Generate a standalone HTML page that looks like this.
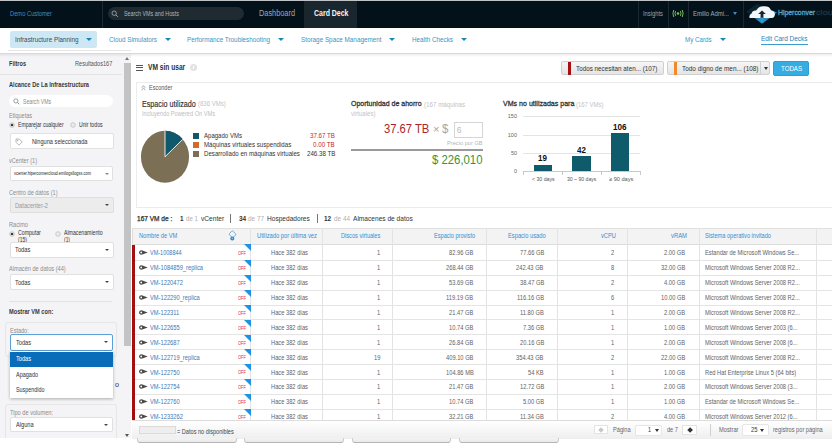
<!DOCTYPE html>
<html><head><meta charset="utf-8"><style>
html,body{margin:0;padding:0;width:832px;height:444px;overflow:hidden;background:#fff;position:relative;font-family:"Liberation Sans", sans-serif;}

</style></head><body style="">
<div style="position:absolute;left:0px;top:0px;width:832px;height:1px;background:#bfc3c6;"></div>
<div style="position:absolute;left:0px;top:1px;width:832px;height:27px;background:#03111a;"></div>
<span style="position:absolute;left:10.00px;top:10.00px;white-space:pre;line-height:7px;font-family:&quot;Liberation Sans&quot;, sans-serif;font-size:7px;font-weight:400;color:#3d8fc2;transform:scaleX(0.8240);transform-origin:0 0;">Demo Customer</span>
<div style="position:absolute;left:102px;top:1px;width:1px;height:27px;background:#1b2a33;"></div>
<div style="position:absolute;left:108px;top:7px;width:136px;height:13px;background:#1f2b31;border-radius:7px;"></div>
<svg style="position:absolute;left:111px;top:10px" width="8" height="8" viewBox="0 0 8 8"><circle cx="3.2" cy="3.2" r="2.2" fill="none" stroke="#9aa4a9" stroke-width="0.9"/><line x1="4.8" y1="4.8" x2="6.8" y2="6.8" stroke="#9aa4a9" stroke-width="1"/></svg>
<span style="position:absolute;left:124.00px;top:10.00px;white-space:pre;line-height:7px;font-family:&quot;Liberation Sans&quot;, sans-serif;font-size:7px;font-weight:400;color:#aeb7bc;transform:scaleX(0.7682);transform-origin:0 0;">Search VMs and Hosts</span>
<span style="position:absolute;left:258.50px;top:8.75px;white-space:pre;line-height:8.5px;font-family:&quot;Liberation Sans&quot;, sans-serif;font-size:8.5px;font-weight:400;color:#a0a8ad;transform:scaleX(0.8655);transform-origin:0 0;">Dashboard</span>
<div style="position:absolute;left:304px;top:1px;width:53px;height:27px;background:#1a262d;"></div>
<span style="position:absolute;left:313.50px;top:8.75px;white-space:pre;line-height:8.5px;font-family:&quot;Liberation Sans&quot;, sans-serif;font-size:8.5px;font-weight:700;color:#f4f6f7;transform:scaleX(0.8202);transform-origin:0 0;">Card Deck</span>
<div style="position:absolute;left:637.5px;top:1px;width:1.0px;height:27px;background:#1a2830;"></div>
<div style="position:absolute;left:668px;top:1px;width:1px;height:27px;background:#1a2830;"></div>
<div style="position:absolute;left:687.5px;top:1px;width:1.0px;height:27px;background:#1a2830;"></div>
<div style="position:absolute;left:742.5px;top:1px;width:1.0px;height:27px;background:#1a2830;"></div>
<span style="position:absolute;left:643.00px;top:9.75px;white-space:pre;line-height:7.5px;font-family:&quot;Liberation Sans&quot;, sans-serif;font-size:7.5px;font-weight:400;color:#9aa3a8;transform:scaleX(0.7734);transform-origin:0 0;">Insights</span>
<svg style="position:absolute;left:672px;top:9px" width="12" height="9" viewBox="0 0 12 9"><circle cx="6" cy="4.5" r="1.3" fill="#7ac05a"/><path d="M3.6 2.2 Q2.4 4.5 3.6 6.8 M8.4 2.2 Q9.6 4.5 8.4 6.8" fill="none" stroke="#7ac05a" stroke-width="1"/><path d="M1.8 1 Q0 4.5 1.8 8 M10.2 1 Q12 4.5 10.2 8" fill="none" stroke="#7ac05a" stroke-width="1"/></svg>
<span style="position:absolute;left:693.00px;top:9.50px;white-space:pre;line-height:8px;font-family:&quot;Liberation Sans&quot;, sans-serif;font-size:8px;font-weight:400;color:#a3abb0;transform:scaleX(0.7427);transform-origin:0 0;">Emilio Admi...</span>
<div style="position:absolute;left:733px;top:12px;width:0;height:0;border-left:2.5px solid transparent;border-right:2.5px solid transparent;border-top:3.5px solid #3d8fc2;"></div>
<svg style="position:absolute;left:744px;top:1px" width="38" height="26" viewBox="744 1 38 26">
<defs><linearGradient id="dg" x1="0" y1="0" x2="1" y2="1"><stop offset="0.35" stop-color="#0c2631"/><stop offset="0.6" stop-color="#2a8cc0"/></linearGradient></defs>
<polygon points="746.3,11.8 757,4 777,12.4 762,23.8" fill="url(#dg)"/>
<path d="M749.6 18 Q748.6 14.6 751.6 13.4 Q752.6 10.2 756.2 10.6 Q758.4 6 764 6.2 Q770 6 771 10.6 Q774.9 11 774.9 14.6 Q774.6 18 771.8 18 Z" fill="#f3f5f7"/>
<polygon points="762,10.6 758.2,13.9 760.6,13.9 760.6,18 763.4,18 763.4,13.9 765.8,13.9" fill="#0d2833"/>
<rect x="760.6" y="17.5" width="2.8" height="5" fill="#2f9bd0"/>
</svg>
<span style="position:absolute;left:778.40px;top:9.40px;white-space:pre;line-height:7.8px;font-family:&quot;Liberation Sans&quot;, sans-serif;font-size:7.8px;font-weight:400;color:#58a2c6;transform:scaleX(0.8800);transform-origin:0 0;-webkit-text-stroke:0.35px #58a2c6;">Hiperconver</span>
<span style="position:absolute;left:815.50px;top:9.40px;white-space:pre;line-height:7.8px;font-family:&quot;Liberation Sans&quot;, sans-serif;font-size:7.8px;font-weight:400;color:#183444;transform:scaleX(1.1802);transform-origin:0 0;-webkit-text-stroke:0.35px #183444;">cloud</span>
<div style="position:absolute;left:0px;top:28px;width:832px;height:25px;background:#ffffff;"></div>
<div style="position:absolute;left:9.5px;top:31.3px;width:87.0px;height:16.7px;background:#cde8f4;border-radius:2px;"></div>
<span style="position:absolute;left:14.50px;top:35.90px;white-space:pre;line-height:7px;font-family:&quot;Liberation Sans&quot;, sans-serif;font-size:7px;font-weight:400;color:#3e4a50;transform:scaleX(0.9015);transform-origin:0 0;">Infrastructure Planning</span>
<div style="position:absolute;left:85.5px;top:38px;width:0;height:0;border-left:3.25px solid transparent;border-right:3.25px solid transparent;border-top:3.5px solid #1a86b5;"></div>
<span style="position:absolute;left:108.50px;top:35.90px;white-space:pre;line-height:7px;font-family:&quot;Liberation Sans&quot;, sans-serif;font-size:7px;font-weight:400;color:#3a94c0;transform:scaleX(0.9004);transform-origin:0 0;">Cloud Simulators</span>
<div style="position:absolute;left:165px;top:38px;width:0;height:0;border-left:3.25px solid transparent;border-right:3.25px solid transparent;border-top:3.5px solid #1a86b5;"></div>
<span style="position:absolute;left:187.00px;top:35.90px;white-space:pre;line-height:7px;font-family:&quot;Liberation Sans&quot;, sans-serif;font-size:7px;font-weight:400;color:#3a94c0;transform:scaleX(0.9037);transform-origin:0 0;">Performance Troubleshooting</span>
<div style="position:absolute;left:277.5px;top:38px;width:0;height:0;border-left:3.25px solid transparent;border-right:3.25px solid transparent;border-top:3.5px solid #1a86b5;"></div>
<span style="position:absolute;left:301.00px;top:35.90px;white-space:pre;line-height:7px;font-family:&quot;Liberation Sans&quot;, sans-serif;font-size:7px;font-weight:400;color:#3a94c0;transform:scaleX(0.9032);transform-origin:0 0;">Storage Space Management</span>
<div style="position:absolute;left:389px;top:38px;width:0;height:0;border-left:3.25px solid transparent;border-right:3.25px solid transparent;border-top:3.5px solid #1a86b5;"></div>
<span style="position:absolute;left:412.00px;top:35.90px;white-space:pre;line-height:7px;font-family:&quot;Liberation Sans&quot;, sans-serif;font-size:7px;font-weight:400;color:#3a94c0;transform:scaleX(0.9005);transform-origin:0 0;">Health Checks</span>
<div style="position:absolute;left:461px;top:38px;width:0;height:0;border-left:3.25px solid transparent;border-right:3.25px solid transparent;border-top:3.5px solid #1a86b5;"></div>
<span style="position:absolute;left:685.00px;top:35.75px;white-space:pre;line-height:7.5px;font-family:&quot;Liberation Sans&quot;, sans-serif;font-size:7.5px;font-weight:400;color:#3a94c0;transform:scaleX(0.8257);transform-origin:0 0;">My Cards</span>
<div style="position:absolute;left:719.5px;top:38px;width:0;height:0;border-left:3.25px solid transparent;border-right:3.25px solid transparent;border-top:3.5px solid #1a86b5;"></div>
<span style="position:absolute;left:761.00px;top:35.25px;white-space:pre;line-height:7.5px;font-family:&quot;Liberation Sans&quot;, sans-serif;font-size:7.5px;font-weight:400;color:#2a7fae;transform:scaleX(0.8581);transform-origin:0 0;">Edit Card Decks</span>
<div style="position:absolute;left:761px;top:44px;width:46.5px;height:1px;background:#3a9ac8;"></div>
<div style="position:absolute;left:8px;top:50px;width:123px;height:0.6000000000000014px;background:#e6e6e6;"></div>
<div style="position:absolute;left:0px;top:53px;width:832px;height:1px;background:#d9d9d9;"></div>
<div style="position:absolute;left:0px;top:54px;width:122px;height:384px;background:#f4f4f6;"></div>
<div style="position:absolute;left:122px;top:54px;width:9px;height:384px;background:#f4f4f6;"></div>
<div style="position:absolute;left:123.5px;top:63px;width:7.0px;height:283px;background:#c3c3c3;"></div>
<div style="position:absolute;left:125px;top:57px;width:0;height:0;border-left:2.5px solid transparent;border-right:2.5px solid transparent;border-bottom:3px solid #777;"></div>
<div style="position:absolute;left:125px;top:433.5px;width:0;height:0;border-left:2.5px solid transparent;border-right:2.5px solid transparent;border-top:3px solid #555;"></div>
<div style="position:absolute;left:0px;top:54px;width:832px;height:2.5px;background:linear-gradient(rgba(0,0,0,0.07),rgba(0,0,0,0));"></div>
<span style="position:absolute;left:9.00px;top:59.95px;white-space:pre;line-height:7.5px;font-family:&quot;Liberation Sans&quot;, sans-serif;font-size:7.5px;font-weight:700;color:#333a3e;transform:scaleX(0.7416);transform-origin:0 0;">Filtros</span>
<span style="position:absolute;left:75.00px;top:59.95px;white-space:pre;line-height:7.5px;font-family:&quot;Liberation Sans&quot;, sans-serif;font-size:7.5px;font-weight:400;color:#555;transform:scaleX(0.7453);transform-origin:0 0;">Resultados167</span>
<div style="position:absolute;left:0px;top:73.5px;width:122px;height:1.0px;background:#e3e3e5;"></div>
<span style="position:absolute;left:9.00px;top:81.25px;white-space:pre;line-height:7.5px;font-family:&quot;Liberation Sans&quot;, sans-serif;font-size:7.5px;font-weight:700;color:#333a3e;transform:scaleX(0.7526);transform-origin:0 0;">Alcance De La Infraestructura</span>
<div style="position:absolute;left:9px;top:95px;width:104px;height:12px;background:#fff;border-radius:6px;"></div>
<svg style="position:absolute;left:12.5px;top:98px" width="7" height="7" viewBox="0 0 7 7"><circle cx="2.9" cy="2.9" r="2.1" fill="none" stroke="#888" stroke-width="0.8"/><line x1="4.4" y1="4.4" x2="6.3" y2="6.3" stroke="#888" stroke-width="0.9"/></svg>
<span style="position:absolute;left:22.70px;top:97.90px;white-space:pre;line-height:7px;font-family:&quot;Liberation Sans&quot;, sans-serif;font-size:7px;font-weight:400;color:#8a8a8a;transform:scaleX(0.7344);transform-origin:0 0;">Search VMs</span>
<span style="position:absolute;left:9.00px;top:111.75px;white-space:pre;line-height:7.5px;font-family:&quot;Liberation Sans&quot;, sans-serif;font-size:7.5px;font-weight:400;color:#8c8c8c;transform:scaleX(0.7353);transform-origin:0 0;">Etiquetas</span>
<svg style="position:absolute;left:8.6px;top:121.9px" width="6" height="6" viewBox="0 0 6 6"><circle cx="3" cy="3" r="2.3" fill="#fff" stroke="#a8a8a8" stroke-width="0.6"/><circle cx="3" cy="3" r="1.35" fill="#3a3a3a"/></svg>
<span style="position:absolute;left:18.00px;top:121.40px;white-space:pre;line-height:7px;font-family:&quot;Liberation Sans&quot;, sans-serif;font-size:7px;font-weight:400;color:#333;transform:scaleX(0.7278);transform-origin:0 0;">Emparejar cualquier</span>
<svg style="position:absolute;left:70.2px;top:121.9px" width="6" height="6" viewBox="0 0 6 6"><circle cx="3" cy="3" r="2.3" fill="#ececec" stroke="#b0b0b0" stroke-width="0.6"/></svg>
<span style="position:absolute;left:79.00px;top:121.40px;white-space:pre;line-height:7px;font-family:&quot;Liberation Sans&quot;, sans-serif;font-size:7px;font-weight:400;color:#333;transform:scaleX(0.7397);transform-origin:0 0;">Unir todos</span>
<div style="position:absolute;left:9.5px;top:133px;width:104.0px;height:16.30000000000001px;background:#fff;border:1px solid #e1e1e1;border-radius:2px;box-sizing:border-box;"></div>
<svg style="position:absolute;left:15px;top:137.5px" width="8" height="8" viewBox="0 0 8 8"><path d="M1 1 L4.2 1 L7.2 4 L4 7.2 L1 4.2 Z" fill="none" stroke="#999" stroke-width="0.7"/><circle cx="2.6" cy="2.6" r="0.6" fill="#999"/></svg>
<span style="position:absolute;left:31.70px;top:137.60px;white-space:pre;line-height:7px;font-family:&quot;Liberation Sans&quot;, sans-serif;font-size:7px;font-weight:400;color:#333;transform:scaleX(0.8056);transform-origin:0 0;">Ninguna seleccionada</span>
<span style="position:absolute;left:9.00px;top:156.95px;white-space:pre;line-height:7.5px;font-family:&quot;Liberation Sans&quot;, sans-serif;font-size:7.5px;font-weight:400;color:#8c8c8c;transform:scaleX(0.7464);transform-origin:0 0;">vCenter (1)</span>
<div style="position:absolute;left:9.5px;top:166px;width:103.8px;height:15.300000000000011px;background:#fff;border:1px solid #e0e0e0;border-radius:2px;box-sizing:border-box;"></div>
<span style="position:absolute;left:13.80px;top:171.15px;white-space:pre;line-height:5px;font-family:&quot;Liberation Sans&quot;, sans-serif;font-size:5px;font-weight:400;color:#222;transform:scaleX(0.7871);transform-origin:0 0;">vcenter.hiperconvercloud.emilogsllogss.com</span>
<div style="position:absolute;left:104.8px;top:172.65px;width:0;height:0;border-left:2px solid transparent;border-right:2px solid transparent;border-top:2.5px solid #888;"></div>
<span style="position:absolute;left:9.00px;top:188.85px;white-space:pre;line-height:7.5px;font-family:&quot;Liberation Sans&quot;, sans-serif;font-size:7.5px;font-weight:400;color:#8c8c8c;transform:scaleX(0.7520);transform-origin:0 0;">Centro de datos (1)</span>
<div style="position:absolute;left:9.5px;top:197.4px;width:104.0px;height:15.599999999999994px;background:#ececec;border:1px solid #dedede;border-radius:2px;box-sizing:border-box;"></div>
<span style="position:absolute;left:15.00px;top:201.70px;white-space:pre;line-height:7px;font-family:&quot;Liberation Sans&quot;, sans-serif;font-size:7px;font-weight:400;color:#999;transform:scaleX(0.8154);transform-origin:0 0;">Datacenter-2</span>
<div style="position:absolute;left:105.0px;top:204.2px;width:0;height:0;border-left:2px solid transparent;border-right:2px solid transparent;border-top:2.5px solid #444;"></div>
<span style="position:absolute;left:9.00px;top:221.25px;white-space:pre;line-height:7.5px;font-family:&quot;Liberation Sans&quot;, sans-serif;font-size:7.5px;font-weight:400;color:#8c8c8c;transform:scaleX(0.7469);transform-origin:0 0;">Racimo</span>
<svg style="position:absolute;left:8.6px;top:230.6px" width="6" height="6" viewBox="0 0 6 6"><circle cx="3" cy="3" r="2.3" fill="#fff" stroke="#a8a8a8" stroke-width="0.6"/><circle cx="3" cy="3" r="1.35" fill="#3a3a3a"/></svg>
<span style="position:absolute;left:17.50px;top:230.35px;white-space:pre;line-height:6.5px;font-family:&quot;Liberation Sans&quot;, sans-serif;font-size:6.5px;font-weight:400;color:#333;transform:scaleX(0.7987);transform-origin:0 0;">Computar</span>
<span style="position:absolute;left:17.50px;top:237.25px;white-space:pre;line-height:6.5px;font-family:&quot;Liberation Sans&quot;, sans-serif;font-size:6.5px;font-weight:400;color:#333;transform:scaleX(0.7784);transform-origin:0 0;">(15)</span>
<svg style="position:absolute;left:54.6px;top:230.6px" width="6" height="6" viewBox="0 0 6 6"><circle cx="3" cy="3" r="2.3" fill="#ececec" stroke="#b0b0b0" stroke-width="0.6"/></svg>
<span style="position:absolute;left:63.60px;top:230.35px;white-space:pre;line-height:6.5px;font-family:&quot;Liberation Sans&quot;, sans-serif;font-size:6.5px;font-weight:400;color:#333;transform:scaleX(0.7992);transform-origin:0 0;">Almacenamiento</span>
<span style="position:absolute;left:63.60px;top:237.25px;white-space:pre;line-height:6.5px;font-family:&quot;Liberation Sans&quot;, sans-serif;font-size:6.5px;font-weight:400;color:#333;transform:scaleX(0.7544);transform-origin:0 0;">(1)</span>
<div style="position:absolute;left:9.5px;top:242px;width:104.0px;height:15.5px;background:#fff;border:1px solid #e0e0e0;border-radius:2px;box-sizing:border-box;"></div>
<span style="position:absolute;left:15.40px;top:246.25px;white-space:pre;line-height:7px;font-family:&quot;Liberation Sans&quot;, sans-serif;font-size:7px;font-weight:400;color:#333;transform:scaleX(0.8241);transform-origin:0 0;">Todas</span>
<div style="position:absolute;left:105.0px;top:248.75px;width:0;height:0;border-left:2px solid transparent;border-right:2px solid transparent;border-top:2.5px solid #444;"></div>
<span style="position:absolute;left:9.00px;top:265.45px;white-space:pre;line-height:7.5px;font-family:&quot;Liberation Sans&quot;, sans-serif;font-size:7.5px;font-weight:400;color:#8c8c8c;transform:scaleX(0.7513);transform-origin:0 0;">Almacén de datos (44)</span>
<div style="position:absolute;left:9.5px;top:274px;width:104.0px;height:16px;background:#fff;border:1px solid #e0e0e0;border-radius:2px;box-sizing:border-box;"></div>
<span style="position:absolute;left:15.40px;top:278.50px;white-space:pre;line-height:7px;font-family:&quot;Liberation Sans&quot;, sans-serif;font-size:7px;font-weight:400;color:#333;transform:scaleX(0.8241);transform-origin:0 0;">Todas</span>
<div style="position:absolute;left:105.0px;top:281.0px;width:0;height:0;border-left:2px solid transparent;border-right:2px solid transparent;border-top:2.5px solid #444;"></div>
<div style="position:absolute;left:9px;top:301px;width:103px;height:1px;background:#e2e2e2;"></div>
<span style="position:absolute;left:9.00px;top:307.65px;white-space:pre;line-height:7.5px;font-family:&quot;Liberation Sans&quot;, sans-serif;font-size:7.5px;font-weight:700;color:#333a3e;transform:scaleX(0.7538);transform-origin:0 0;">Mostrar VM con:</span>
<div style="position:absolute;left:4.5px;top:321.5px;width:112.0px;height:35.5px;border:1px solid #e6e6e6;border-radius:3px;box-sizing:border-box;"></div>
<span style="position:absolute;left:9.70px;top:326.65px;white-space:pre;line-height:7.5px;font-family:&quot;Liberation Sans&quot;, sans-serif;font-size:7.5px;font-weight:400;color:#8c8c8c;transform:scaleX(0.7351);transform-origin:0 0;">Estado:</span>
<div style="position:absolute;left:9.5px;top:334.2px;width:103.3px;height:16.400000000000034px;background:#fff;border:1px solid #5aa0d8;border-radius:2px;box-sizing:border-box;"></div>
<span style="position:absolute;left:15.70px;top:338.90px;white-space:pre;line-height:7px;font-family:&quot;Liberation Sans&quot;, sans-serif;font-size:7px;font-weight:400;color:#333;transform:scaleX(0.8080);transform-origin:0 0;">Todas</span>
<div style="position:absolute;left:104.3px;top:341.4px;width:0;height:0;border-left:2px solid transparent;border-right:2px solid transparent;border-top:2.5px solid #444;"></div>
<span style="position:absolute;left:115.00px;top:381.25px;white-space:pre;line-height:7.5px;font-family:&quot;Liberation Sans&quot;, sans-serif;font-size:7.5px;font-weight:400;color:#333;transform:scaleX(0.9588);transform-origin:0 0;">o</span>
<div style="position:absolute;left:9.5px;top:351px;width:103.3px;height:46.69999999999999px;background:#fff;box-shadow:0 1px 3px rgba(0,0,0,0.3);"></div>
<div style="position:absolute;left:9.5px;top:351.5px;width:103.3px;height:15.100000000000023px;background:#0a6dba;"></div>
<span style="position:absolute;left:15.70px;top:355.30px;white-space:pre;line-height:7px;font-family:&quot;Liberation Sans&quot;, sans-serif;font-size:7px;font-weight:400;color:#fff;transform:scaleX(0.8080);transform-origin:0 0;">Todas</span>
<span style="position:absolute;left:15.70px;top:370.80px;white-space:pre;line-height:7px;font-family:&quot;Liberation Sans&quot;, sans-serif;font-size:7px;font-weight:400;color:#333;transform:scaleX(0.7848);transform-origin:0 0;">Apagado</span>
<span style="position:absolute;left:15.70px;top:386.10px;white-space:pre;line-height:7px;font-family:&quot;Liberation Sans&quot;, sans-serif;font-size:7px;font-weight:400;color:#333;transform:scaleX(0.7706);transform-origin:0 0;">Suspendido</span>
<div style="position:absolute;left:4.5px;top:404px;width:112.0px;height:36px;border:1px solid #e6e6e6;border-radius:3px;box-sizing:border-box;"></div>
<span style="position:absolute;left:9.70px;top:408.55px;white-space:pre;line-height:7.5px;font-family:&quot;Liberation Sans&quot;, sans-serif;font-size:7.5px;font-weight:400;color:#8c8c8c;transform:scaleX(0.7509);transform-origin:0 0;">Tipo de volumen:</span>
<div style="position:absolute;left:9.5px;top:417px;width:103.3px;height:15px;background:#fff;border:1px solid #e0e0e0;border-radius:2px;box-sizing:border-box;"></div>
<span style="position:absolute;left:15.70px;top:421.00px;white-space:pre;line-height:7px;font-family:&quot;Liberation Sans&quot;, sans-serif;font-size:7px;font-weight:400;color:#333;transform:scaleX(0.8075);transform-origin:0 0;">Alguna</span>
<div style="position:absolute;left:104.3px;top:423.5px;width:0;height:0;border-left:2px solid transparent;border-right:2px solid transparent;border-top:2.5px solid #444;"></div>
<div style="position:absolute;left:0px;top:438px;width:132px;height:6px;background:#fff;"></div>
<div style="position:absolute;left:136.3px;top:64.5px;width:6.5px;height:1.2000000000000028px;background:#555;"></div>
<div style="position:absolute;left:136.3px;top:67.3px;width:6.5px;height:1.2000000000000028px;background:#555;"></div>
<div style="position:absolute;left:136.3px;top:70.1px;width:6.5px;height:1.2000000000000028px;background:#555;"></div>
<span style="position:absolute;left:148.00px;top:62.80px;white-space:pre;line-height:9px;font-family:&quot;Liberation Sans&quot;, sans-serif;font-size:9px;font-weight:700;color:#2b3135;transform:scaleX(0.7364);transform-origin:0 0;">VM sin usar</span>
<div style="position:absolute;left:189.5px;top:63.6px;width:7px;height:7px;border-radius:50%;background:#e3e3e3;"></div>
<div style="position:absolute;left:192.6px;top:65.5px;width:0.9000000000000057px;height:3.700000000000003px;background:#fff;"></div>
<div style="position:absolute;left:560.6px;top:60.7px;width:103.79999999999995px;height:14.799999999999997px;background:linear-gradient(#f6f6f6,#e4e4e4);border:1px solid #d0d0d0;border-radius:2px;box-sizing:border-box;"></div>
<div style="position:absolute;left:567.6px;top:61.5px;width:3.0px;height:13.299999999999997px;background:#a50f0f;"></div>
<span style="position:absolute;left:575.60px;top:64.70px;white-space:pre;line-height:7px;font-family:&quot;Liberation Sans&quot;, sans-serif;font-size:7px;font-weight:400;color:#333;transform:scaleX(0.9016);transform-origin:0 0;">Todos necesitan aten... (107)</span>
<div style="position:absolute;left:666.8px;top:60.7px;width:103.40000000000009px;height:14.799999999999997px;background:linear-gradient(#f6f6f6,#e4e4e4);border:1px solid #d0d0d0;border-radius:2px;box-sizing:border-box;"></div>
<div style="position:absolute;left:673.8px;top:61.5px;width:3.0px;height:13.299999999999997px;background:#f08a2c;"></div>
<span style="position:absolute;left:681.80px;top:64.70px;white-space:pre;line-height:7px;font-family:&quot;Liberation Sans&quot;, sans-serif;font-size:7px;font-weight:400;color:#333;transform:scaleX(0.9143);transform-origin:0 0;">Todo digno de men... (108)</span>
<div style="position:absolute;left:760.3px;top:61.5px;width:0.900000000000091px;height:13.299999999999997px;background:#cfcfcf;"></div>
<div style="position:absolute;left:763.5px;top:67px;width:0;height:0;border-left:2px solid transparent;border-right:2px solid transparent;border-top:3px solid #333;"></div>
<div style="position:absolute;left:773.1px;top:60.9px;width:35.5px;height:15.000000000000007px;background:#35ade2;border:1px solid #2c9fd3;border-radius:2px;box-sizing:border-box;"></div>
<span style="position:absolute;left:780.80px;top:64.55px;white-space:pre;line-height:7.5px;font-family:&quot;Liberation Sans&quot;, sans-serif;font-size:7.5px;font-weight:400;color:#fff;transform:scaleX(0.8170);transform-origin:0 0;">TODAS</span>
<div style="position:absolute;left:136.2px;top:82px;width:703.8px;height:126.19999999999999px;border:1px solid #ececec;box-sizing:border-box;"></div>
<svg style="position:absolute;left:140.8px;top:85px" width="5" height="6" viewBox="0 0 5 6"><path d="M0.6 2.6 L2.5 0.9 L4.4 2.6 M0.6 5 L2.5 3.3 L4.4 5" fill="none" stroke="#777" stroke-width="0.7"/></svg>
<span style="position:absolute;left:148.50px;top:84.75px;white-space:pre;line-height:6.5px;font-family:&quot;Liberation Sans&quot;, sans-serif;font-size:6.5px;font-weight:400;color:#555;transform:scaleX(0.8482);transform-origin:0 0;">Esconder</span>
<span style="position:absolute;left:141.50px;top:99.90px;white-space:pre;line-height:9px;font-family:&quot;Liberation Sans&quot;, sans-serif;font-size:9px;font-weight:400;color:#2a2e32;transform:scaleX(0.7965);transform-origin:0 0;-webkit-text-stroke:0.15px #2a2e32;">Espacio utilizado</span>
<span style="position:absolute;left:197.50px;top:99.80px;white-space:pre;line-height:8px;font-family:&quot;Liberation Sans&quot;, sans-serif;font-size:8px;font-weight:400;color:#c3c3c3;transform:scaleX(0.7506);transform-origin:0 0;">(836 VMs)</span>
<span style="position:absolute;left:141.50px;top:110.40px;white-space:pre;line-height:7px;font-family:&quot;Liberation Sans&quot;, sans-serif;font-size:7px;font-weight:400;color:#bdbdbd;transform:scaleX(0.8051);transform-origin:0 0;">Incluyendo Powered On VMs</span>
<svg style="position:absolute;left:139px;top:129px" width="52" height="56" viewBox="0 0 52 56">
<g transform="translate(26,27.8) scale(0.925,1)">
<circle cx="0" cy="0" r="26" fill="#7b7056"/>
<path d="M0 0 L0 -26 A26 26 0 0 1 19.2 -17.5 Z" fill="#10586b"/>
<line x1="0" y1="0" x2="0" y2="-26" stroke="#fff" stroke-width="0.9"/>
<line x1="0" y1="0" x2="19.2" y2="-17.5" stroke="#fff" stroke-width="0.9"/>
</g></svg>
<div style="position:absolute;left:193.3px;top:132.5px;width:6.0px;height:6.0px;background:#10586b;"></div>
<div style="position:absolute;left:193.3px;top:141.6px;width:6.0px;height:6.0px;background:#d26a2a;"></div>
<div style="position:absolute;left:193.3px;top:150.8px;width:6.0px;height:6.0px;background:#7b7056;"></div>
<span style="position:absolute;left:203.80px;top:132.30px;white-space:pre;line-height:7px;font-family:&quot;Liberation Sans&quot;, sans-serif;font-size:7px;font-weight:400;color:#333;transform:scaleX(0.8639);transform-origin:0 0;">Apagado VMs</span>
<span style="position:absolute;left:203.80px;top:141.00px;white-space:pre;line-height:7px;font-family:&quot;Liberation Sans&quot;, sans-serif;font-size:7px;font-weight:400;color:#333;transform:scaleX(0.8753);transform-origin:0 0;">Máquinas virtuales suspendidas</span>
<span style="position:absolute;left:203.80px;top:150.20px;white-space:pre;line-height:7px;font-family:&quot;Liberation Sans&quot;, sans-serif;font-size:7px;font-weight:400;color:#333;transform:scaleX(0.8739);transform-origin:0 0;">Desarrollado en máquinas virtuales</span>
<span style="position:absolute;left:310.00px;top:132.30px;white-space:pre;line-height:7px;font-family:&quot;Liberation Sans&quot;, sans-serif;font-size:7px;font-weight:400;color:#b8323a;transform:scaleX(0.8840);transform-origin:0 0;">37.67 TB</span>
<span style="position:absolute;left:313.20px;top:141.00px;white-space:pre;line-height:7px;font-family:&quot;Liberation Sans&quot;, sans-serif;font-size:7px;font-weight:400;color:#c2272d;transform:scaleX(0.8938);transform-origin:0 0;">0.00 TB</span>
<span style="position:absolute;left:306.60px;top:150.20px;white-space:pre;line-height:7px;font-family:&quot;Liberation Sans&quot;, sans-serif;font-size:7px;font-weight:400;color:#333;transform:scaleX(0.8823);transform-origin:0 0;">246.38 TB</span>
<span style="position:absolute;left:351.10px;top:100.10px;white-space:pre;line-height:8px;font-family:&quot;Liberation Sans&quot;, sans-serif;font-size:8px;font-weight:400;color:#2e3236;transform:scaleX(0.8770);transform-origin:0 0;-webkit-text-stroke:0.3px #2e3236;">Oportunidad de ahorro</span>
<span style="position:absolute;left:424.30px;top:100.60px;white-space:pre;line-height:7px;font-family:&quot;Liberation Sans&quot;, sans-serif;font-size:7px;font-weight:400;color:#c3c3c3;transform:scaleX(0.8853);transform-origin:0 0;">(167 máquinas</span>
<span style="position:absolute;left:351.10px;top:109.80px;white-space:pre;line-height:7px;font-family:&quot;Liberation Sans&quot;, sans-serif;font-size:7px;font-weight:400;color:#c3c3c3;transform:scaleX(0.8590);transform-origin:0 0;">virtuales)</span>
<span style="position:absolute;left:383.70px;top:123.00px;white-space:pre;line-height:12px;font-family:&quot;Liberation Sans&quot;, sans-serif;font-size:12px;font-weight:400;color:#a8252b;transform:scaleX(0.9343);transform-origin:0 0;">37.67 TB</span>
<span style="position:absolute;left:432.50px;top:124.00px;white-space:pre;line-height:11px;font-family:&quot;Liberation Sans&quot;, sans-serif;font-size:11px;font-weight:400;color:#a5a5a5;transform:scaleX(1.0097);transform-origin:0 0;">×</span>
<span style="position:absolute;left:441.70px;top:123.00px;white-space:pre;line-height:12px;font-family:&quot;Liberation Sans&quot;, sans-serif;font-size:12px;font-weight:400;color:#a5a5a5;transform:scaleX(0.9570);transform-origin:0 0;">$</span>
<div style="position:absolute;left:454.4px;top:121.6px;width:28.200000000000045px;height:16.900000000000006px;border:1px solid #d5d5d5;box-sizing:border-box;"></div>
<span style="position:absolute;left:456.80px;top:126.05px;white-space:pre;line-height:8.5px;font-family:&quot;Liberation Sans&quot;, sans-serif;font-size:8.5px;font-weight:400;color:#bbb;">6</span>
<span style="position:absolute;left:447.00px;top:139.90px;white-space:pre;line-height:6px;font-family:&quot;Liberation Sans&quot;, sans-serif;font-size:6px;font-weight:400;color:#b5b5b5;transform:scaleX(0.9446);transform-origin:0 0;">Precio por GB</span>
<div style="position:absolute;left:350.6px;top:149px;width:132.0px;height:1.8000000000000114px;background:#9a9a9a;"></div>
<span style="position:absolute;left:432.10px;top:153.60px;white-space:pre;line-height:12px;font-family:&quot;Liberation Sans&quot;, sans-serif;font-size:12px;font-weight:400;color:#379237;transform:scaleX(0.9459);transform-origin:0 0;">$ 226,010</span>
<span style="position:absolute;left:503.10px;top:100.10px;white-space:pre;line-height:8px;font-family:&quot;Liberation Sans&quot;, sans-serif;font-size:8px;font-weight:400;color:#2e3236;transform:scaleX(0.8822);transform-origin:0 0;-webkit-text-stroke:0.3px #2e3236;">VMs no utilizadas para</span>
<span style="position:absolute;left:576.10px;top:100.60px;white-space:pre;line-height:7px;font-family:&quot;Liberation Sans&quot;, sans-serif;font-size:7px;font-weight:400;color:#c3c3c3;transform:scaleX(0.8484);transform-origin:0 0;">(167 VMs)</span>
<div style="position:absolute;left:523.4px;top:116.3px;width:116.60000000000002px;height:0.7999999999999972px;background:#e4e4e4;"></div>
<span style="position:absolute;left:507.81px;top:113.95px;white-space:pre;line-height:5.5px;font-family:&quot;Liberation Sans&quot;, sans-serif;font-size:5.5px;font-weight:400;color:#666;">150</span>
<div style="position:absolute;left:523.4px;top:135px;width:116.60000000000002px;height:0.8000000000000114px;background:#e4e4e4;"></div>
<span style="position:absolute;left:507.81px;top:132.65px;white-space:pre;line-height:5.5px;font-family:&quot;Liberation Sans&quot;, sans-serif;font-size:5.5px;font-weight:400;color:#666;">100</span>
<div style="position:absolute;left:523.4px;top:153.2px;width:116.60000000000002px;height:0.8000000000000114px;background:#e4e4e4;"></div>
<span style="position:absolute;left:510.88px;top:150.85px;white-space:pre;line-height:5.5px;font-family:&quot;Liberation Sans&quot;, sans-serif;font-size:5.5px;font-weight:400;color:#666;">50</span>
<div style="position:absolute;left:523.4px;top:171.1px;width:116.60000000000002px;height:0.8000000000000114px;background:#c9c9c9;"></div>
<span style="position:absolute;left:513.94px;top:168.75px;white-space:pre;line-height:5.5px;font-family:&quot;Liberation Sans&quot;, sans-serif;font-size:5.5px;font-weight:400;color:#666;">0</span>
<div style="position:absolute;left:523.4px;top:171.1px;width:0.7999999999999545px;height:4.400000000000006px;background:#c9c9c9;"></div>
<div style="position:absolute;left:562.3px;top:171.1px;width:0.7999999999999545px;height:4.400000000000006px;background:#c9c9c9;"></div>
<div style="position:absolute;left:600.9px;top:171.1px;width:0.7999999999999545px;height:4.400000000000006px;background:#c9c9c9;"></div>
<div style="position:absolute;left:639.5px;top:171.1px;width:0.7999999999999545px;height:4.400000000000006px;background:#c9c9c9;"></div>
<div style="position:absolute;left:533.5px;top:164.6px;width:18.700000000000045px;height:6.5px;background:#0f5b6b;"></div>
<span style="position:absolute;left:538.40px;top:154.20px;white-space:pre;line-height:9px;font-family:&quot;Liberation Sans&quot;, sans-serif;font-size:9px;font-weight:700;color:#111;transform:scaleX(0.8886);transform-origin:0 0;">19</span>
<div style="position:absolute;left:572.1px;top:155.9px;width:18.600000000000023px;height:15.199999999999989px;background:#0f5b6b;"></div>
<span style="position:absolute;left:576.95px;top:145.70px;white-space:pre;line-height:9px;font-family:&quot;Liberation Sans&quot;, sans-serif;font-size:9px;font-weight:700;color:#111;transform:scaleX(0.8886);transform-origin:0 0;">42</span>
<div style="position:absolute;left:610.6px;top:132.9px;width:18.699999999999932px;height:38.19999999999999px;background:#0f5b6b;"></div>
<span style="position:absolute;left:613.15px;top:122.70px;white-space:pre;line-height:9px;font-family:&quot;Liberation Sans&quot;, sans-serif;font-size:9px;font-weight:700;color:#111;transform:scaleX(0.9048);transform-origin:0 0;">106</span>
<span style="position:absolute;left:531.50px;top:175.60px;white-space:pre;line-height:6px;font-family:&quot;Liberation Sans&quot;, sans-serif;font-size:6px;font-weight:400;color:#555;transform:scaleX(0.8668);transform-origin:0 0;">< 30 days</span>
<span style="position:absolute;left:567.00px;top:175.60px;white-space:pre;line-height:6px;font-family:&quot;Liberation Sans&quot;, sans-serif;font-size:6px;font-weight:400;color:#555;transform:scaleX(0.8514);transform-origin:0 0;">30 ~ 90 days</span>
<span style="position:absolute;left:608.60px;top:175.60px;white-space:pre;line-height:6px;font-family:&quot;Liberation Sans&quot;, sans-serif;font-size:6px;font-weight:400;color:#555;transform:scaleX(0.9390);transform-origin:0 0;">≥ 90 days</span>
<span style="position:absolute;left:136.50px;top:214.85px;white-space:pre;line-height:7.5px;font-family:&quot;Liberation Sans&quot;, sans-serif;font-size:7.5px;font-weight:400;color:#2a2a2a;transform:scaleX(0.8726);transform-origin:0 0;-webkit-text-stroke:0.25px #2a2a2a;">167 VM de :</span>
<span style="position:absolute;left:179.80px;top:214.85px;white-space:pre;line-height:7.5px;font-family:&quot;Liberation Sans&quot;, sans-serif;font-size:7.5px;font-weight:700;color:#333;transform:scaleX(0.8390);transform-origin:0 0;">1</span>
<span style="position:absolute;left:185.60px;top:214.85px;white-space:pre;line-height:7.5px;font-family:&quot;Liberation Sans&quot;, sans-serif;font-size:7.5px;font-weight:400;color:#b0b0b0;transform:scaleX(0.8145);transform-origin:0 0;">de 1</span>
<span style="position:absolute;left:200.70px;top:214.85px;white-space:pre;line-height:7.5px;font-family:&quot;Liberation Sans&quot;, sans-serif;font-size:7.5px;font-weight:400;color:#333;transform:scaleX(0.8795);transform-origin:0 0;">vCenter</span>
<div style="position:absolute;left:230.3px;top:213.7px;width:1.0px;height:9.800000000000011px;background:#777;"></div>
<span style="position:absolute;left:238.80px;top:214.85px;white-space:pre;line-height:7.5px;font-family:&quot;Liberation Sans&quot;, sans-serif;font-size:7.5px;font-weight:700;color:#333;transform:scaleX(0.8629);transform-origin:0 0;">34</span>
<span style="position:absolute;left:248.20px;top:214.85px;white-space:pre;line-height:7.5px;font-family:&quot;Liberation Sans&quot;, sans-serif;font-size:7.5px;font-weight:400;color:#b0b0b0;transform:scaleX(0.8519);transform-origin:0 0;">de 77</span>
<span style="position:absolute;left:267.00px;top:214.85px;white-space:pre;line-height:7.5px;font-family:&quot;Liberation Sans&quot;, sans-serif;font-size:7.5px;font-weight:400;color:#333;transform:scaleX(0.8771);transform-origin:0 0;">Hospedadores</span>
<div style="position:absolute;left:316.5px;top:213.7px;width:1.0px;height:9.800000000000011px;background:#777;"></div>
<span style="position:absolute;left:324.40px;top:214.85px;white-space:pre;line-height:7.5px;font-family:&quot;Liberation Sans&quot;, sans-serif;font-size:7.5px;font-weight:700;color:#333;transform:scaleX(0.8629);transform-origin:0 0;">12</span>
<span style="position:absolute;left:333.80px;top:214.85px;white-space:pre;line-height:7.5px;font-family:&quot;Liberation Sans&quot;, sans-serif;font-size:7.5px;font-weight:400;color:#b0b0b0;transform:scaleX(0.8519);transform-origin:0 0;">de 44</span>
<span style="position:absolute;left:353.10px;top:214.85px;white-space:pre;line-height:7.5px;font-family:&quot;Liberation Sans&quot;, sans-serif;font-size:7.5px;font-weight:400;color:#333;transform:scaleX(0.8783);transform-origin:0 0;">Almacenes de datos</span>
<div style="position:absolute;left:131.8px;top:228.2px;width:700.2px;height:17.0px;background:#f3f3f3;border-top:1px solid #e0e0e0;border-bottom:1px solid #dcdcdc;box-sizing:border-box;"></div>
<span style="position:absolute;left:138.60px;top:232.75px;white-space:pre;line-height:6.5px;font-family:&quot;Liberation Sans&quot;, sans-serif;font-size:6.5px;font-weight:400;color:#2f8fd6;transform:scaleX(0.8738);transform-origin:0 0;">Nombre de VM</span>
<svg style="position:absolute;left:226px;top:229px" width="12" height="13" viewBox="226 229 12 13">
<rect x="230" y="231.6" width="5" height="5.4" rx="1" fill="#eef4fa" stroke="#7aa2c6" stroke-width="0.9" transform="rotate(-45 232.5 234.3)"/>
<circle cx="232.3" cy="238.4" r="2" fill="#3b80c6"/>
<circle cx="232.3" cy="238.4" r="0.8" fill="#8fc0ea"/>
</svg>
<span style="position:absolute;left:257.00px;top:232.75px;white-space:pre;line-height:6.5px;font-family:&quot;Liberation Sans&quot;, sans-serif;font-size:6.5px;font-weight:400;color:#2f8fd6;transform:scaleX(0.8928);transform-origin:0 0;">Utilizado por última vez</span>
<span style="position:absolute;left:340.50px;top:232.75px;white-space:pre;line-height:6.5px;font-family:&quot;Liberation Sans&quot;, sans-serif;font-size:6.5px;font-weight:400;color:#2f8fd6;transform:scaleX(0.8634);transform-origin:0 0;">Discos virtuales</span>
<span style="position:absolute;left:433.50px;top:232.75px;white-space:pre;line-height:6.5px;font-family:&quot;Liberation Sans&quot;, sans-serif;font-size:6.5px;font-weight:400;color:#2f8fd6;transform:scaleX(0.8616);transform-origin:0 0;">Espacio provisto</span>
<span style="position:absolute;left:507.60px;top:232.75px;white-space:pre;line-height:6.5px;font-family:&quot;Liberation Sans&quot;, sans-serif;font-size:6.5px;font-weight:400;color:#2f8fd6;transform:scaleX(0.8818);transform-origin:0 0;">Espacio usado</span>
<span style="position:absolute;left:600.70px;top:232.75px;white-space:pre;line-height:6.5px;font-family:&quot;Liberation Sans&quot;, sans-serif;font-size:6.5px;font-weight:400;color:#2f8fd6;transform:scaleX(0.8832);transform-origin:0 0;">vCPU</span>
<span style="position:absolute;left:671.00px;top:232.75px;white-space:pre;line-height:6.5px;font-family:&quot;Liberation Sans&quot;, sans-serif;font-size:6.5px;font-weight:400;color:#2f8fd6;transform:scaleX(0.8981);transform-origin:0 0;">vRAM</span>
<span style="position:absolute;left:705.30px;top:232.75px;white-space:pre;line-height:6.5px;font-family:&quot;Liberation Sans&quot;, sans-serif;font-size:6.5px;font-weight:400;color:#2f8fd6;transform:scaleX(0.8656);transform-origin:0 0;">Sistema operativo invitado</span>
<div style="position:absolute;left:250px;top:228.2px;width:1px;height:192.10000000000002px;background:#e3e3e3;"></div>
<div style="position:absolute;left:322px;top:228.2px;width:1px;height:192.10000000000002px;background:#e3e3e3;"></div>
<div style="position:absolute;left:392px;top:228.2px;width:1px;height:192.10000000000002px;background:#e3e3e3;"></div>
<div style="position:absolute;left:486px;top:228.2px;width:1px;height:192.10000000000002px;background:#e3e3e3;"></div>
<div style="position:absolute;left:557px;top:228.2px;width:1px;height:192.10000000000002px;background:#e3e3e3;"></div>
<div style="position:absolute;left:627px;top:228.2px;width:1px;height:192.10000000000002px;background:#e3e3e3;"></div>
<div style="position:absolute;left:699px;top:228.2px;width:1px;height:192.10000000000002px;background:#e3e3e3;"></div>
<div style="position:absolute;left:816px;top:228.2px;width:1px;height:192.10000000000002px;background:#e3e3e3;"></div>
<div style="position:absolute;left:131.8px;top:228.2px;width:0.9000000000000057px;height:192.40000000000003px;background:#dedede;"></div>
<div style="position:absolute;left:131.8px;top:260px;width:700.2px;height:1px;background:#e4e4e4;"></div>
<svg style="position:absolute;left:138.6px;top:249.85px" width="9" height="5" viewBox="0 0 9 5"><circle cx="2.2" cy="2.5" r="1.55" fill="none" stroke="#4a4a4a" stroke-width="1.3"/><path d="M3.4 0.6 L8.7 2.5 L3.4 4.4 Z" fill="#4a4a4a"/></svg>
<span style="position:absolute;left:149.70px;top:249.06px;white-space:pre;line-height:7px;font-family:&quot;Liberation Sans&quot;, sans-serif;font-size:7px;font-weight:400;color:#3c78b6;transform:scaleX(0.7882);transform-origin:0 0;">VM-1008844</span>
<span style="position:absolute;left:238.30px;top:250.85px;white-space:pre;line-height:5px;font-family:&quot;Liberation Sans&quot;, sans-serif;font-size:5px;font-weight:400;color:#e8312f;transform:scaleX(0.8000);transform-origin:0 0;">OFF</span>
<div style="position:absolute;left:243.5px;top:244.40px;width:0;height:0;border-top:7px solid #1f93e2;border-left:7px solid transparent;"></div>
<span style="position:absolute;left:271.00px;top:249.06px;white-space:pre;line-height:7px;font-family:&quot;Liberation Sans&quot;, sans-serif;font-size:7px;font-weight:400;color:#636363;transform:scaleX(0.8194);transform-origin:0 0;">Hace 382 días</span>
<span style="position:absolute;left:376.80px;top:249.06px;white-space:pre;line-height:7px;font-family:&quot;Liberation Sans&quot;, sans-serif;font-size:7px;font-weight:400;color:#636363;transform:scaleX(0.8200);transform-origin:0 0;">1</span>
<span style="position:absolute;left:449.05px;top:249.06px;white-space:pre;line-height:7px;font-family:&quot;Liberation Sans&quot;, sans-serif;font-size:7px;font-weight:400;color:#636363;transform:scaleX(0.8200);transform-origin:0 0;">82.96 GB</span>
<span style="position:absolute;left:519.55px;top:249.06px;white-space:pre;line-height:7px;font-family:&quot;Liberation Sans&quot;, sans-serif;font-size:7px;font-weight:400;color:#636363;transform:scaleX(0.8200);transform-origin:0 0;">77.66 GB</span>
<span style="position:absolute;left:610.80px;top:249.06px;white-space:pre;line-height:7px;font-family:&quot;Liberation Sans&quot;, sans-serif;font-size:7px;font-weight:400;color:#636363;transform:scaleX(0.8200);transform-origin:0 0;">2</span>
<span style="position:absolute;left:664.14px;top:249.06px;white-space:pre;line-height:7px;font-family:&quot;Liberation Sans&quot;, sans-serif;font-size:7px;font-weight:400;color:#636363;transform:scaleX(0.8200);transform-origin:0 0;">2.00 GB</span>
<span style="position:absolute;left:705.30px;top:249.06px;white-space:pre;line-height:7px;font-family:&quot;Liberation Sans&quot;, sans-serif;font-size:7px;font-weight:400;color:#636363;transform:scaleX(0.8200);transform-origin:0 0;">Estandar de Microsoft Windows Se...</span>
<div style="position:absolute;left:131.8px;top:275px;width:700.2px;height:1px;background:#e4e4e4;"></div>
<svg style="position:absolute;left:138.6px;top:265.14px" width="9" height="5" viewBox="0 0 9 5"><circle cx="2.2" cy="2.5" r="1.55" fill="none" stroke="#4a4a4a" stroke-width="1.3"/><path d="M3.4 0.6 L8.7 2.5 L3.4 4.4 Z" fill="#4a4a4a"/></svg>
<span style="position:absolute;left:149.70px;top:264.35px;white-space:pre;line-height:7px;font-family:&quot;Liberation Sans&quot;, sans-serif;font-size:7px;font-weight:400;color:#3c78b6;transform:scaleX(0.8200);transform-origin:0 0;">VM-1084859_replica</span>
<span style="position:absolute;left:238.30px;top:266.14px;white-space:pre;line-height:5px;font-family:&quot;Liberation Sans&quot;, sans-serif;font-size:5px;font-weight:400;color:#e8312f;transform:scaleX(0.8000);transform-origin:0 0;">OFF</span>
<div style="position:absolute;left:243.5px;top:260.10px;width:0;height:0;border-top:7px solid #1f93e2;border-left:7px solid transparent;"></div>
<span style="position:absolute;left:271.00px;top:264.35px;white-space:pre;line-height:7px;font-family:&quot;Liberation Sans&quot;, sans-serif;font-size:7px;font-weight:400;color:#636363;transform:scaleX(0.8194);transform-origin:0 0;">Hace 382 días</span>
<span style="position:absolute;left:376.80px;top:264.35px;white-space:pre;line-height:7px;font-family:&quot;Liberation Sans&quot;, sans-serif;font-size:7px;font-weight:400;color:#636363;transform:scaleX(0.8200);transform-origin:0 0;">1</span>
<span style="position:absolute;left:445.86px;top:264.35px;white-space:pre;line-height:7px;font-family:&quot;Liberation Sans&quot;, sans-serif;font-size:7px;font-weight:400;color:#636363;transform:scaleX(0.8200);transform-origin:0 0;">268.44 GB</span>
<span style="position:absolute;left:516.36px;top:264.35px;white-space:pre;line-height:7px;font-family:&quot;Liberation Sans&quot;, sans-serif;font-size:7px;font-weight:400;color:#636363;transform:scaleX(0.8200);transform-origin:0 0;">242.43 GB</span>
<span style="position:absolute;left:610.80px;top:264.35px;white-space:pre;line-height:7px;font-family:&quot;Liberation Sans&quot;, sans-serif;font-size:7px;font-weight:400;color:#636363;transform:scaleX(0.8200);transform-origin:0 0;">8</span>
<span style="position:absolute;left:660.95px;top:264.35px;white-space:pre;line-height:7px;font-family:&quot;Liberation Sans&quot;, sans-serif;font-size:7px;font-weight:400;color:#636363;transform:scaleX(0.8200);transform-origin:0 0;">32.00 GB</span>
<span style="position:absolute;left:705.30px;top:264.35px;white-space:pre;line-height:7px;font-family:&quot;Liberation Sans&quot;, sans-serif;font-size:7px;font-weight:400;color:#636363;transform:scaleX(0.8200);transform-origin:0 0;">Microsoft Windows Server 2008 R2...</span>
<div style="position:absolute;left:131.8px;top:290px;width:700.2px;height:1px;background:#e4e4e4;"></div>
<svg style="position:absolute;left:138.6px;top:280.02px" width="9" height="5" viewBox="0 0 9 5"><circle cx="2.2" cy="2.5" r="1.55" fill="none" stroke="#4a4a4a" stroke-width="1.3"/><path d="M3.4 0.6 L8.7 2.5 L3.4 4.4 Z" fill="#4a4a4a"/></svg>
<span style="position:absolute;left:149.70px;top:279.23px;white-space:pre;line-height:7px;font-family:&quot;Liberation Sans&quot;, sans-serif;font-size:7px;font-weight:400;color:#3c78b6;transform:scaleX(0.8200);transform-origin:0 0;">VM-1220472</span>
<span style="position:absolute;left:238.30px;top:281.02px;white-space:pre;line-height:5px;font-family:&quot;Liberation Sans&quot;, sans-serif;font-size:5px;font-weight:400;color:#e8312f;transform:scaleX(0.8000);transform-origin:0 0;">OFF</span>
<div style="position:absolute;left:243.5px;top:274.98px;width:0;height:0;border-top:7px solid #1f93e2;border-left:7px solid transparent;"></div>
<span style="position:absolute;left:271.00px;top:279.23px;white-space:pre;line-height:7px;font-family:&quot;Liberation Sans&quot;, sans-serif;font-size:7px;font-weight:400;color:#636363;transform:scaleX(0.8194);transform-origin:0 0;">Hace 382 días</span>
<span style="position:absolute;left:376.80px;top:279.23px;white-space:pre;line-height:7px;font-family:&quot;Liberation Sans&quot;, sans-serif;font-size:7px;font-weight:400;color:#636363;transform:scaleX(0.8200);transform-origin:0 0;">1</span>
<span style="position:absolute;left:449.05px;top:279.23px;white-space:pre;line-height:7px;font-family:&quot;Liberation Sans&quot;, sans-serif;font-size:7px;font-weight:400;color:#636363;transform:scaleX(0.8200);transform-origin:0 0;">53.69 GB</span>
<span style="position:absolute;left:519.55px;top:279.23px;white-space:pre;line-height:7px;font-family:&quot;Liberation Sans&quot;, sans-serif;font-size:7px;font-weight:400;color:#636363;transform:scaleX(0.8200);transform-origin:0 0;">38.47 GB</span>
<span style="position:absolute;left:610.80px;top:279.23px;white-space:pre;line-height:7px;font-family:&quot;Liberation Sans&quot;, sans-serif;font-size:7px;font-weight:400;color:#636363;transform:scaleX(0.8200);transform-origin:0 0;">2</span>
<span style="position:absolute;left:664.14px;top:279.23px;white-space:pre;line-height:7px;font-family:&quot;Liberation Sans&quot;, sans-serif;font-size:7px;font-weight:400;color:#636363;transform:scaleX(0.8200);transform-origin:0 0;">4.00 GB</span>
<span style="position:absolute;left:705.30px;top:279.23px;white-space:pre;line-height:7px;font-family:&quot;Liberation Sans&quot;, sans-serif;font-size:7px;font-weight:400;color:#636363;transform:scaleX(0.8200);transform-origin:0 0;">Microsoft Windows Server 2008 R2...</span>
<div style="position:absolute;left:131.8px;top:305px;width:700.2px;height:1px;background:#e4e4e4;"></div>
<svg style="position:absolute;left:138.6px;top:294.90px" width="9" height="5" viewBox="0 0 9 5"><circle cx="2.2" cy="2.5" r="1.55" fill="none" stroke="#4a4a4a" stroke-width="1.3"/><path d="M3.4 0.6 L8.7 2.5 L3.4 4.4 Z" fill="#4a4a4a"/></svg>
<span style="position:absolute;left:149.70px;top:294.11px;white-space:pre;line-height:7px;font-family:&quot;Liberation Sans&quot;, sans-serif;font-size:7px;font-weight:400;color:#3c78b6;transform:scaleX(0.8200);transform-origin:0 0;">VM-122290_replica</span>
<span style="position:absolute;left:238.30px;top:295.90px;white-space:pre;line-height:5px;font-family:&quot;Liberation Sans&quot;, sans-serif;font-size:5px;font-weight:400;color:#e8312f;transform:scaleX(0.8000);transform-origin:0 0;">OFF</span>
<div style="position:absolute;left:243.5px;top:289.86px;width:0;height:0;border-top:7px solid #1f93e2;border-left:7px solid transparent;"></div>
<span style="position:absolute;left:271.00px;top:294.11px;white-space:pre;line-height:7px;font-family:&quot;Liberation Sans&quot;, sans-serif;font-size:7px;font-weight:400;color:#636363;transform:scaleX(0.8194);transform-origin:0 0;">Hace 382 días</span>
<span style="position:absolute;left:376.80px;top:294.11px;white-space:pre;line-height:7px;font-family:&quot;Liberation Sans&quot;, sans-serif;font-size:7px;font-weight:400;color:#636363;transform:scaleX(0.8200);transform-origin:0 0;">1</span>
<span style="position:absolute;left:446.28px;top:294.11px;white-space:pre;line-height:7px;font-family:&quot;Liberation Sans&quot;, sans-serif;font-size:7px;font-weight:400;color:#636363;transform:scaleX(0.8200);transform-origin:0 0;">119.19 GB</span>
<span style="position:absolute;left:516.78px;top:294.11px;white-space:pre;line-height:7px;font-family:&quot;Liberation Sans&quot;, sans-serif;font-size:7px;font-weight:400;color:#636363;transform:scaleX(0.8200);transform-origin:0 0;">116.16 GB</span>
<span style="position:absolute;left:610.80px;top:294.11px;white-space:pre;line-height:7px;font-family:&quot;Liberation Sans&quot;, sans-serif;font-size:7px;font-weight:400;color:#636363;transform:scaleX(0.8200);transform-origin:0 0;">6</span>
<span style="position:absolute;left:660.95px;top:294.11px;white-space:pre;line-height:7px;font-family:&quot;Liberation Sans&quot;, sans-serif;font-size:7px;font-weight:400;color:#636363;transform:scaleX(0.8200);transform-origin:0 0;">10.00 GB</span>
<span style="position:absolute;left:705.30px;top:294.11px;white-space:pre;line-height:7px;font-family:&quot;Liberation Sans&quot;, sans-serif;font-size:7px;font-weight:400;color:#636363;transform:scaleX(0.8200);transform-origin:0 0;">Microsoft Windows Server 2008 R2...</span>
<div style="position:absolute;left:131.8px;top:319px;width:700.2px;height:1px;background:#e4e4e4;"></div>
<svg style="position:absolute;left:138.6px;top:309.78px" width="9" height="5" viewBox="0 0 9 5"><circle cx="2.2" cy="2.5" r="1.55" fill="none" stroke="#4a4a4a" stroke-width="1.3"/><path d="M3.4 0.6 L8.7 2.5 L3.4 4.4 Z" fill="#4a4a4a"/></svg>
<span style="position:absolute;left:149.70px;top:308.99px;white-space:pre;line-height:7px;font-family:&quot;Liberation Sans&quot;, sans-serif;font-size:7px;font-weight:400;color:#3c78b6;transform:scaleX(0.8200);transform-origin:0 0;">VM-122311</span>
<span style="position:absolute;left:238.30px;top:310.78px;white-space:pre;line-height:5px;font-family:&quot;Liberation Sans&quot;, sans-serif;font-size:5px;font-weight:400;color:#e8312f;transform:scaleX(0.8000);transform-origin:0 0;">OFF</span>
<div style="position:absolute;left:243.5px;top:304.74px;width:0;height:0;border-top:7px solid #1f93e2;border-left:7px solid transparent;"></div>
<span style="position:absolute;left:271.00px;top:308.99px;white-space:pre;line-height:7px;font-family:&quot;Liberation Sans&quot;, sans-serif;font-size:7px;font-weight:400;color:#636363;transform:scaleX(0.8194);transform-origin:0 0;">Hace 382 días</span>
<span style="position:absolute;left:376.80px;top:308.99px;white-space:pre;line-height:7px;font-family:&quot;Liberation Sans&quot;, sans-serif;font-size:7px;font-weight:400;color:#636363;transform:scaleX(0.8200);transform-origin:0 0;">1</span>
<span style="position:absolute;left:449.05px;top:308.99px;white-space:pre;line-height:7px;font-family:&quot;Liberation Sans&quot;, sans-serif;font-size:7px;font-weight:400;color:#636363;transform:scaleX(0.8200);transform-origin:0 0;">21.47 GB</span>
<span style="position:absolute;left:519.97px;top:308.99px;white-space:pre;line-height:7px;font-family:&quot;Liberation Sans&quot;, sans-serif;font-size:7px;font-weight:400;color:#636363;transform:scaleX(0.8200);transform-origin:0 0;">11.80 GB</span>
<span style="position:absolute;left:610.80px;top:308.99px;white-space:pre;line-height:7px;font-family:&quot;Liberation Sans&quot;, sans-serif;font-size:7px;font-weight:400;color:#636363;transform:scaleX(0.8200);transform-origin:0 0;">1</span>
<span style="position:absolute;left:664.14px;top:308.99px;white-space:pre;line-height:7px;font-family:&quot;Liberation Sans&quot;, sans-serif;font-size:7px;font-weight:400;color:#636363;transform:scaleX(0.8200);transform-origin:0 0;">2.00 GB</span>
<span style="position:absolute;left:705.30px;top:308.99px;white-space:pre;line-height:7px;font-family:&quot;Liberation Sans&quot;, sans-serif;font-size:7px;font-weight:400;color:#636363;transform:scaleX(0.8200);transform-origin:0 0;">Microsoft Windows Server 2008 R2...</span>
<div style="position:absolute;left:131.8px;top:334px;width:700.2px;height:1px;background:#e4e4e4;"></div>
<svg style="position:absolute;left:138.6px;top:324.66px" width="9" height="5" viewBox="0 0 9 5"><circle cx="2.2" cy="2.5" r="1.55" fill="none" stroke="#4a4a4a" stroke-width="1.3"/><path d="M3.4 0.6 L8.7 2.5 L3.4 4.4 Z" fill="#4a4a4a"/></svg>
<span style="position:absolute;left:149.70px;top:323.87px;white-space:pre;line-height:7px;font-family:&quot;Liberation Sans&quot;, sans-serif;font-size:7px;font-weight:400;color:#3c78b6;transform:scaleX(0.8200);transform-origin:0 0;">VM-122655</span>
<span style="position:absolute;left:238.30px;top:325.66px;white-space:pre;line-height:5px;font-family:&quot;Liberation Sans&quot;, sans-serif;font-size:5px;font-weight:400;color:#e8312f;transform:scaleX(0.8000);transform-origin:0 0;">OFF</span>
<div style="position:absolute;left:243.5px;top:319.62px;width:0;height:0;border-top:7px solid #1f93e2;border-left:7px solid transparent;"></div>
<span style="position:absolute;left:271.00px;top:323.87px;white-space:pre;line-height:7px;font-family:&quot;Liberation Sans&quot;, sans-serif;font-size:7px;font-weight:400;color:#636363;transform:scaleX(0.8194);transform-origin:0 0;">Hace 382 días</span>
<span style="position:absolute;left:376.80px;top:323.87px;white-space:pre;line-height:7px;font-family:&quot;Liberation Sans&quot;, sans-serif;font-size:7px;font-weight:400;color:#636363;transform:scaleX(0.8200);transform-origin:0 0;">1</span>
<span style="position:absolute;left:449.05px;top:323.87px;white-space:pre;line-height:7px;font-family:&quot;Liberation Sans&quot;, sans-serif;font-size:7px;font-weight:400;color:#636363;transform:scaleX(0.8200);transform-origin:0 0;">10.74 GB</span>
<span style="position:absolute;left:522.74px;top:323.87px;white-space:pre;line-height:7px;font-family:&quot;Liberation Sans&quot;, sans-serif;font-size:7px;font-weight:400;color:#636363;transform:scaleX(0.8200);transform-origin:0 0;">7.36 GB</span>
<span style="position:absolute;left:610.80px;top:323.87px;white-space:pre;line-height:7px;font-family:&quot;Liberation Sans&quot;, sans-serif;font-size:7px;font-weight:400;color:#636363;transform:scaleX(0.8200);transform-origin:0 0;">1</span>
<span style="position:absolute;left:664.14px;top:323.87px;white-space:pre;line-height:7px;font-family:&quot;Liberation Sans&quot;, sans-serif;font-size:7px;font-weight:400;color:#636363;transform:scaleX(0.8200);transform-origin:0 0;">1.00 GB</span>
<span style="position:absolute;left:705.30px;top:323.87px;white-space:pre;line-height:7px;font-family:&quot;Liberation Sans&quot;, sans-serif;font-size:7px;font-weight:400;color:#636363;transform:scaleX(0.8200);transform-origin:0 0;">Microsoft Windows Server 2003 (6...</span>
<div style="position:absolute;left:131.8px;top:349px;width:700.2px;height:1px;background:#e4e4e4;"></div>
<svg style="position:absolute;left:138.6px;top:339.54px" width="9" height="5" viewBox="0 0 9 5"><circle cx="2.2" cy="2.5" r="1.55" fill="none" stroke="#4a4a4a" stroke-width="1.3"/><path d="M3.4 0.6 L8.7 2.5 L3.4 4.4 Z" fill="#4a4a4a"/></svg>
<span style="position:absolute;left:149.70px;top:338.75px;white-space:pre;line-height:7px;font-family:&quot;Liberation Sans&quot;, sans-serif;font-size:7px;font-weight:400;color:#3c78b6;transform:scaleX(0.8200);transform-origin:0 0;">VM-122687</span>
<span style="position:absolute;left:238.30px;top:340.54px;white-space:pre;line-height:5px;font-family:&quot;Liberation Sans&quot;, sans-serif;font-size:5px;font-weight:400;color:#e8312f;transform:scaleX(0.8000);transform-origin:0 0;">OFF</span>
<div style="position:absolute;left:243.5px;top:334.50px;width:0;height:0;border-top:7px solid #1f93e2;border-left:7px solid transparent;"></div>
<span style="position:absolute;left:271.00px;top:338.75px;white-space:pre;line-height:7px;font-family:&quot;Liberation Sans&quot;, sans-serif;font-size:7px;font-weight:400;color:#636363;transform:scaleX(0.8194);transform-origin:0 0;">Hace 382 días</span>
<span style="position:absolute;left:376.80px;top:338.75px;white-space:pre;line-height:7px;font-family:&quot;Liberation Sans&quot;, sans-serif;font-size:7px;font-weight:400;color:#636363;transform:scaleX(0.8200);transform-origin:0 0;">1</span>
<span style="position:absolute;left:449.05px;top:338.75px;white-space:pre;line-height:7px;font-family:&quot;Liberation Sans&quot;, sans-serif;font-size:7px;font-weight:400;color:#636363;transform:scaleX(0.8200);transform-origin:0 0;">26.84 GB</span>
<span style="position:absolute;left:519.55px;top:338.75px;white-space:pre;line-height:7px;font-family:&quot;Liberation Sans&quot;, sans-serif;font-size:7px;font-weight:400;color:#636363;transform:scaleX(0.8200);transform-origin:0 0;">20.16 GB</span>
<span style="position:absolute;left:610.80px;top:338.75px;white-space:pre;line-height:7px;font-family:&quot;Liberation Sans&quot;, sans-serif;font-size:7px;font-weight:400;color:#636363;transform:scaleX(0.8200);transform-origin:0 0;">1</span>
<span style="position:absolute;left:664.14px;top:338.75px;white-space:pre;line-height:7px;font-family:&quot;Liberation Sans&quot;, sans-serif;font-size:7px;font-weight:400;color:#636363;transform:scaleX(0.8200);transform-origin:0 0;">2.00 GB</span>
<span style="position:absolute;left:705.30px;top:338.75px;white-space:pre;line-height:7px;font-family:&quot;Liberation Sans&quot;, sans-serif;font-size:7px;font-weight:400;color:#636363;transform:scaleX(0.8200);transform-origin:0 0;">Microsoft Windows Server 2008 (6...</span>
<div style="position:absolute;left:131.8px;top:364px;width:700.2px;height:1px;background:#e4e4e4;"></div>
<svg style="position:absolute;left:138.6px;top:354.42px" width="9" height="5" viewBox="0 0 9 5"><circle cx="2.2" cy="2.5" r="1.55" fill="none" stroke="#4a4a4a" stroke-width="1.3"/><path d="M3.4 0.6 L8.7 2.5 L3.4 4.4 Z" fill="#4a4a4a"/></svg>
<span style="position:absolute;left:149.70px;top:353.63px;white-space:pre;line-height:7px;font-family:&quot;Liberation Sans&quot;, sans-serif;font-size:7px;font-weight:400;color:#3c78b6;transform:scaleX(0.8200);transform-origin:0 0;">VM-122719_replica</span>
<span style="position:absolute;left:238.30px;top:355.42px;white-space:pre;line-height:5px;font-family:&quot;Liberation Sans&quot;, sans-serif;font-size:5px;font-weight:400;color:#e8312f;transform:scaleX(0.8000);transform-origin:0 0;">OFF</span>
<div style="position:absolute;left:243.5px;top:349.38px;width:0;height:0;border-top:7px solid #1f93e2;border-left:7px solid transparent;"></div>
<span style="position:absolute;left:271.00px;top:353.63px;white-space:pre;line-height:7px;font-family:&quot;Liberation Sans&quot;, sans-serif;font-size:7px;font-weight:400;color:#636363;transform:scaleX(0.8194);transform-origin:0 0;">Hace 382 días</span>
<span style="position:absolute;left:373.61px;top:353.63px;white-space:pre;line-height:7px;font-family:&quot;Liberation Sans&quot;, sans-serif;font-size:7px;font-weight:400;color:#636363;transform:scaleX(0.8200);transform-origin:0 0;">19</span>
<span style="position:absolute;left:445.86px;top:353.63px;white-space:pre;line-height:7px;font-family:&quot;Liberation Sans&quot;, sans-serif;font-size:7px;font-weight:400;color:#636363;transform:scaleX(0.8200);transform-origin:0 0;">409.10 GB</span>
<span style="position:absolute;left:516.36px;top:353.63px;white-space:pre;line-height:7px;font-family:&quot;Liberation Sans&quot;, sans-serif;font-size:7px;font-weight:400;color:#636363;transform:scaleX(0.8200);transform-origin:0 0;">354.43 GB</span>
<span style="position:absolute;left:610.80px;top:353.63px;white-space:pre;line-height:7px;font-family:&quot;Liberation Sans&quot;, sans-serif;font-size:7px;font-weight:400;color:#636363;transform:scaleX(0.8200);transform-origin:0 0;">2</span>
<span style="position:absolute;left:660.95px;top:353.63px;white-space:pre;line-height:7px;font-family:&quot;Liberation Sans&quot;, sans-serif;font-size:7px;font-weight:400;color:#636363;transform:scaleX(0.8200);transform-origin:0 0;">22.00 GB</span>
<span style="position:absolute;left:705.30px;top:353.63px;white-space:pre;line-height:7px;font-family:&quot;Liberation Sans&quot;, sans-serif;font-size:7px;font-weight:400;color:#636363;transform:scaleX(0.8200);transform-origin:0 0;">Microsoft Windows Server 2008 R2...</span>
<div style="position:absolute;left:131.8px;top:379px;width:700.2px;height:1px;background:#e4e4e4;"></div>
<svg style="position:absolute;left:138.6px;top:369.30px" width="9" height="5" viewBox="0 0 9 5"><circle cx="2.2" cy="2.5" r="1.55" fill="none" stroke="#4a4a4a" stroke-width="1.3"/><path d="M3.4 0.6 L8.7 2.5 L3.4 4.4 Z" fill="#4a4a4a"/></svg>
<span style="position:absolute;left:149.70px;top:368.51px;white-space:pre;line-height:7px;font-family:&quot;Liberation Sans&quot;, sans-serif;font-size:7px;font-weight:400;color:#3c78b6;transform:scaleX(0.8200);transform-origin:0 0;">VM-122750</span>
<span style="position:absolute;left:238.30px;top:370.30px;white-space:pre;line-height:5px;font-family:&quot;Liberation Sans&quot;, sans-serif;font-size:5px;font-weight:400;color:#e8312f;transform:scaleX(0.8000);transform-origin:0 0;">OFF</span>
<div style="position:absolute;left:243.5px;top:364.26px;width:0;height:0;border-top:7px solid #1f93e2;border-left:7px solid transparent;"></div>
<span style="position:absolute;left:271.00px;top:368.51px;white-space:pre;line-height:7px;font-family:&quot;Liberation Sans&quot;, sans-serif;font-size:7px;font-weight:400;color:#636363;transform:scaleX(0.8194);transform-origin:0 0;">Hace 382 días</span>
<span style="position:absolute;left:376.80px;top:368.51px;white-space:pre;line-height:7px;font-family:&quot;Liberation Sans&quot;, sans-serif;font-size:7px;font-weight:400;color:#636363;transform:scaleX(0.8200);transform-origin:0 0;">1</span>
<span style="position:absolute;left:445.54px;top:368.51px;white-space:pre;line-height:7px;font-family:&quot;Liberation Sans&quot;, sans-serif;font-size:7px;font-weight:400;color:#636363;transform:scaleX(0.8200);transform-origin:0 0;">104.86 MB</span>
<span style="position:absolute;left:528.16px;top:368.51px;white-space:pre;line-height:7px;font-family:&quot;Liberation Sans&quot;, sans-serif;font-size:7px;font-weight:400;color:#636363;transform:scaleX(0.8200);transform-origin:0 0;">54 KB</span>
<span style="position:absolute;left:610.80px;top:368.51px;white-space:pre;line-height:7px;font-family:&quot;Liberation Sans&quot;, sans-serif;font-size:7px;font-weight:400;color:#636363;transform:scaleX(0.8200);transform-origin:0 0;">1</span>
<span style="position:absolute;left:664.14px;top:368.51px;white-space:pre;line-height:7px;font-family:&quot;Liberation Sans&quot;, sans-serif;font-size:7px;font-weight:400;color:#636363;transform:scaleX(0.8200);transform-origin:0 0;">1.00 GB</span>
<span style="position:absolute;left:705.30px;top:368.51px;white-space:pre;line-height:7px;font-family:&quot;Liberation Sans&quot;, sans-serif;font-size:7px;font-weight:400;color:#636363;transform:scaleX(0.8200);transform-origin:0 0;">Red Hat Enterprise Linux 5 (64 bits)</span>
<div style="position:absolute;left:131.8px;top:394px;width:700.2px;height:1px;background:#e4e4e4;"></div>
<svg style="position:absolute;left:138.6px;top:384.18px" width="9" height="5" viewBox="0 0 9 5"><circle cx="2.2" cy="2.5" r="1.55" fill="none" stroke="#4a4a4a" stroke-width="1.3"/><path d="M3.4 0.6 L8.7 2.5 L3.4 4.4 Z" fill="#4a4a4a"/></svg>
<span style="position:absolute;left:149.70px;top:383.39px;white-space:pre;line-height:7px;font-family:&quot;Liberation Sans&quot;, sans-serif;font-size:7px;font-weight:400;color:#3c78b6;transform:scaleX(0.8200);transform-origin:0 0;">VM-122754</span>
<span style="position:absolute;left:238.30px;top:385.18px;white-space:pre;line-height:5px;font-family:&quot;Liberation Sans&quot;, sans-serif;font-size:5px;font-weight:400;color:#e8312f;transform:scaleX(0.8000);transform-origin:0 0;">OFF</span>
<div style="position:absolute;left:243.5px;top:379.14px;width:0;height:0;border-top:7px solid #1f93e2;border-left:7px solid transparent;"></div>
<span style="position:absolute;left:271.00px;top:383.39px;white-space:pre;line-height:7px;font-family:&quot;Liberation Sans&quot;, sans-serif;font-size:7px;font-weight:400;color:#636363;transform:scaleX(0.8194);transform-origin:0 0;">Hace 382 días</span>
<span style="position:absolute;left:376.80px;top:383.39px;white-space:pre;line-height:7px;font-family:&quot;Liberation Sans&quot;, sans-serif;font-size:7px;font-weight:400;color:#636363;transform:scaleX(0.8200);transform-origin:0 0;">1</span>
<span style="position:absolute;left:449.05px;top:383.39px;white-space:pre;line-height:7px;font-family:&quot;Liberation Sans&quot;, sans-serif;font-size:7px;font-weight:400;color:#636363;transform:scaleX(0.8200);transform-origin:0 0;">21.47 GB</span>
<span style="position:absolute;left:519.55px;top:383.39px;white-space:pre;line-height:7px;font-family:&quot;Liberation Sans&quot;, sans-serif;font-size:7px;font-weight:400;color:#636363;transform:scaleX(0.8200);transform-origin:0 0;">12.72 GB</span>
<span style="position:absolute;left:610.80px;top:383.39px;white-space:pre;line-height:7px;font-family:&quot;Liberation Sans&quot;, sans-serif;font-size:7px;font-weight:400;color:#636363;transform:scaleX(0.8200);transform-origin:0 0;">1</span>
<span style="position:absolute;left:664.14px;top:383.39px;white-space:pre;line-height:7px;font-family:&quot;Liberation Sans&quot;, sans-serif;font-size:7px;font-weight:400;color:#636363;transform:scaleX(0.8200);transform-origin:0 0;">2.00 GB</span>
<span style="position:absolute;left:705.30px;top:383.39px;white-space:pre;line-height:7px;font-family:&quot;Liberation Sans&quot;, sans-serif;font-size:7px;font-weight:400;color:#636363;transform:scaleX(0.8200);transform-origin:0 0;">Microsoft Windows Server 2008 (3...</span>
<div style="position:absolute;left:131.8px;top:409px;width:700.2px;height:1px;background:#e4e4e4;"></div>
<svg style="position:absolute;left:138.6px;top:399.06px" width="9" height="5" viewBox="0 0 9 5"><circle cx="2.2" cy="2.5" r="1.55" fill="none" stroke="#4a4a4a" stroke-width="1.3"/><path d="M3.4 0.6 L8.7 2.5 L3.4 4.4 Z" fill="#4a4a4a"/></svg>
<span style="position:absolute;left:149.70px;top:398.27px;white-space:pre;line-height:7px;font-family:&quot;Liberation Sans&quot;, sans-serif;font-size:7px;font-weight:400;color:#3c78b6;transform:scaleX(0.8200);transform-origin:0 0;">VM-122760</span>
<span style="position:absolute;left:238.30px;top:400.06px;white-space:pre;line-height:5px;font-family:&quot;Liberation Sans&quot;, sans-serif;font-size:5px;font-weight:400;color:#e8312f;transform:scaleX(0.8000);transform-origin:0 0;">OFF</span>
<div style="position:absolute;left:243.5px;top:394.02px;width:0;height:0;border-top:7px solid #1f93e2;border-left:7px solid transparent;"></div>
<span style="position:absolute;left:271.00px;top:398.27px;white-space:pre;line-height:7px;font-family:&quot;Liberation Sans&quot;, sans-serif;font-size:7px;font-weight:400;color:#636363;transform:scaleX(0.8194);transform-origin:0 0;">Hace 382 días</span>
<span style="position:absolute;left:376.80px;top:398.27px;white-space:pre;line-height:7px;font-family:&quot;Liberation Sans&quot;, sans-serif;font-size:7px;font-weight:400;color:#636363;transform:scaleX(0.8200);transform-origin:0 0;">1</span>
<span style="position:absolute;left:449.05px;top:398.27px;white-space:pre;line-height:7px;font-family:&quot;Liberation Sans&quot;, sans-serif;font-size:7px;font-weight:400;color:#636363;transform:scaleX(0.8200);transform-origin:0 0;">10.74 GB</span>
<span style="position:absolute;left:522.74px;top:398.27px;white-space:pre;line-height:7px;font-family:&quot;Liberation Sans&quot;, sans-serif;font-size:7px;font-weight:400;color:#636363;transform:scaleX(0.8200);transform-origin:0 0;">5.00 GB</span>
<span style="position:absolute;left:610.80px;top:398.27px;white-space:pre;line-height:7px;font-family:&quot;Liberation Sans&quot;, sans-serif;font-size:7px;font-weight:400;color:#636363;transform:scaleX(0.8200);transform-origin:0 0;">1</span>
<span style="position:absolute;left:664.14px;top:398.27px;white-space:pre;line-height:7px;font-family:&quot;Liberation Sans&quot;, sans-serif;font-size:7px;font-weight:400;color:#636363;transform:scaleX(0.8200);transform-origin:0 0;">1.00 GB</span>
<span style="position:absolute;left:705.30px;top:398.27px;white-space:pre;line-height:7px;font-family:&quot;Liberation Sans&quot;, sans-serif;font-size:7px;font-weight:400;color:#636363;transform:scaleX(0.8200);transform-origin:0 0;">Estandar de Microsoft Windows Se...</span>
<svg style="position:absolute;left:138.6px;top:413.94px" width="9" height="5" viewBox="0 0 9 5"><circle cx="2.2" cy="2.5" r="1.55" fill="none" stroke="#4a4a4a" stroke-width="1.3"/><path d="M3.4 0.6 L8.7 2.5 L3.4 4.4 Z" fill="#4a4a4a"/></svg>
<span style="position:absolute;left:149.70px;top:413.15px;white-space:pre;line-height:7px;font-family:&quot;Liberation Sans&quot;, sans-serif;font-size:7px;font-weight:400;color:#3c78b6;transform:scaleX(0.8200);transform-origin:0 0;">VM-1233262</span>
<span style="position:absolute;left:238.30px;top:414.94px;white-space:pre;line-height:5px;font-family:&quot;Liberation Sans&quot;, sans-serif;font-size:5px;font-weight:400;color:#e8312f;transform:scaleX(0.8000);transform-origin:0 0;">OFF</span>
<div style="position:absolute;left:243.5px;top:408.90px;width:0;height:0;border-top:7px solid #1f93e2;border-left:7px solid transparent;"></div>
<span style="position:absolute;left:271.00px;top:413.15px;white-space:pre;line-height:7px;font-family:&quot;Liberation Sans&quot;, sans-serif;font-size:7px;font-weight:400;color:#636363;transform:scaleX(0.8194);transform-origin:0 0;">Hace 382 días</span>
<span style="position:absolute;left:376.80px;top:413.15px;white-space:pre;line-height:7px;font-family:&quot;Liberation Sans&quot;, sans-serif;font-size:7px;font-weight:400;color:#636363;transform:scaleX(0.8200);transform-origin:0 0;">1</span>
<span style="position:absolute;left:449.05px;top:413.15px;white-space:pre;line-height:7px;font-family:&quot;Liberation Sans&quot;, sans-serif;font-size:7px;font-weight:400;color:#636363;transform:scaleX(0.8200);transform-origin:0 0;">32.21 GB</span>
<span style="position:absolute;left:519.97px;top:413.15px;white-space:pre;line-height:7px;font-family:&quot;Liberation Sans&quot;, sans-serif;font-size:7px;font-weight:400;color:#636363;transform:scaleX(0.8200);transform-origin:0 0;">11.34 GB</span>
<span style="position:absolute;left:610.80px;top:413.15px;white-space:pre;line-height:7px;font-family:&quot;Liberation Sans&quot;, sans-serif;font-size:7px;font-weight:400;color:#636363;transform:scaleX(0.8200);transform-origin:0 0;">2</span>
<span style="position:absolute;left:664.14px;top:413.15px;white-space:pre;line-height:7px;font-family:&quot;Liberation Sans&quot;, sans-serif;font-size:7px;font-weight:400;color:#636363;transform:scaleX(0.8200);transform-origin:0 0;">4.00 GB</span>
<span style="position:absolute;left:705.30px;top:413.15px;white-space:pre;line-height:7px;font-family:&quot;Liberation Sans&quot;, sans-serif;font-size:7px;font-weight:400;color:#636363;transform:scaleX(0.8200);transform-origin:0 0;">Microsoft Windows Server 2012 (6...</span>
<div style="position:absolute;left:132px;top:244.5px;width:3px;height:175.8px;background:#a50e0e;"></div>
<div style="position:absolute;left:131.8px;top:420px;width:700.2px;height:18.5px;background:linear-gradient(#ffffff,#eeeeee);border-top:1px solid #dcdcdc;box-sizing:border-box;"></div>
<div style="position:absolute;left:139px;top:426px;width:37px;height:8.399999999999977px;background:#eeeeee;border:1px solid #dadada;box-sizing:border-box;"></div>
<span style="position:absolute;left:177.30px;top:427.50px;white-space:pre;line-height:7px;font-family:&quot;Liberation Sans&quot;, sans-serif;font-size:7px;font-weight:400;color:#444;transform:scaleX(0.7996);transform-origin:0 0;">= Datos no disponibles</span>
<div style="position:absolute;left:593.6px;top:425.2px;width:14.899999999999977px;height:9.199999999999989px;background:#fff;border:1px solid #e3e3e3;box-sizing:border-box;"></div>
<div style="position:absolute;left:599px;top:427.8px;width:4px;height:4px;background:#c8c8c8;transform:rotate(45deg);"></div>
<span style="position:absolute;left:613.10px;top:426.55px;white-space:pre;line-height:6.5px;font-family:&quot;Liberation Sans&quot;, sans-serif;font-size:6.5px;font-weight:400;color:#666;transform:scaleX(0.8691);transform-origin:0 0;">Página</span>
<div style="position:absolute;left:634.7px;top:424.5px;width:27.5px;height:11.5px;background:#fff;border:1px solid #e6e6e6;border-radius:2px;box-sizing:border-box;"></div>
<span style="position:absolute;left:648.20px;top:426.95px;white-space:pre;line-height:6.5px;font-family:&quot;Liberation Sans&quot;, sans-serif;font-size:6.5px;font-weight:400;color:#333;transform:scaleX(0.8276);transform-origin:0 0;">1</span>
<div style="position:absolute;left:654.8px;top:429px;width:0;height:0;border-left:2.2px solid transparent;border-right:2.2px solid transparent;border-top:3px solid #333;"></div>
<span style="position:absolute;left:666.80px;top:426.55px;white-space:pre;line-height:6.5px;font-family:&quot;Liberation Sans&quot;, sans-serif;font-size:6.5px;font-weight:400;color:#666;transform:scaleX(0.8612);transform-origin:0 0;">de 7</span>
<div style="position:absolute;left:682.4px;top:424.9px;width:15.100000000000023px;height:10.100000000000023px;background:#fff;border:1px solid #e3e3e3;box-sizing:border-box;"></div>
<div style="position:absolute;left:687.8px;top:427.8px;width:4.2px;height:4.2px;background:#333;transform:rotate(45deg);"></div>
<div style="position:absolute;left:710.3px;top:423.6px;width:0.8000000000000682px;height:12.199999999999989px;background:#cfcfcf;"></div>
<span style="position:absolute;left:719.40px;top:426.65px;white-space:pre;line-height:6.5px;font-family:&quot;Liberation Sans&quot;, sans-serif;font-size:6.5px;font-weight:400;color:#666;transform:scaleX(0.8851);transform-origin:0 0;">Mostrar</span>
<div style="position:absolute;left:741.6px;top:424.3px;width:27.0px;height:12.0px;background:#fff;border:1px solid #e6e6e6;border-radius:2px;box-sizing:border-box;"></div>
<span style="position:absolute;left:751.10px;top:426.95px;white-space:pre;line-height:6.5px;font-family:&quot;Liberation Sans&quot;, sans-serif;font-size:6.5px;font-weight:400;color:#333;transform:scaleX(0.8847);transform-origin:0 0;">25</span>
<div style="position:absolute;left:760.1px;top:429px;width:0;height:0;border-left:2.2px solid transparent;border-right:2.2px solid transparent;border-top:3px solid #333;"></div>
<span style="position:absolute;left:773.30px;top:426.65px;white-space:pre;line-height:6.5px;font-family:&quot;Liberation Sans&quot;, sans-serif;font-size:6.5px;font-weight:400;color:#666;transform:scaleX(0.8651);transform-origin:0 0;">registros por página</span>
<div style="position:absolute;left:137px;top:437.5px;width:99.5px;height:5.699999999999989px;background:linear-gradient(#f4f4f4,#e9e9e9);border:1px solid #cdcdcd;border-bottom:1.5px solid #b5b5b5;border-top:none;border-radius:0 0 3px 3px;box-sizing:border-box;"></div>
<div style="position:absolute;left:244.3px;top:437.5px;width:99.5px;height:5.699999999999989px;background:linear-gradient(#f4f4f4,#e9e9e9);border:1px solid #cdcdcd;border-bottom:1.5px solid #b5b5b5;border-top:none;border-radius:0 0 3px 3px;box-sizing:border-box;"></div>
<div style="position:absolute;left:351.7px;top:437.5px;width:99.5px;height:5.699999999999989px;background:linear-gradient(#f4f4f4,#e9e9e9);border:1px solid #cdcdcd;border-bottom:1.5px solid #b5b5b5;border-top:none;border-radius:0 0 3px 3px;box-sizing:border-box;"></div>
<div style="position:absolute;left:459px;top:437.5px;width:99.5px;height:5.699999999999989px;background:linear-gradient(#f4f4f4,#e9e9e9);border:1px solid #cdcdcd;border-bottom:1.5px solid #b5b5b5;border-top:none;border-radius:0 0 3px 3px;box-sizing:border-box;"></div>
</body></html>
